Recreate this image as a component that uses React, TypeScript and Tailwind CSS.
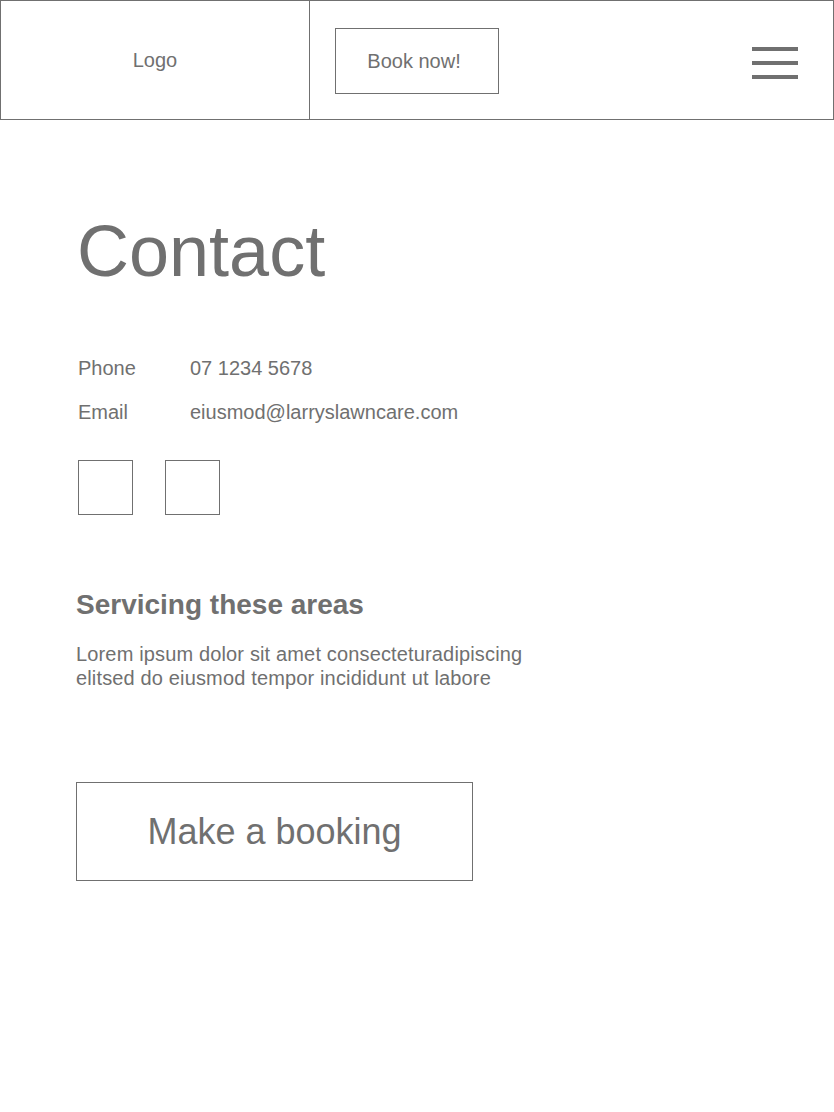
import React from 'react';

// wireframe grey used for every line and label
const ink = 'text-[#707070]';

const Header: React.FC = () => (
  <header className="flex h-[120px] border border-[#707070]">
    <div className="flex w-[309px] items-center justify-center border-r border-[#707070] text-[20px]">
      <span>Logo</span>
    </div>
    <div className="flex flex-1 items-start justify-between pl-[25px] pr-[35px] pt-[27px]">
      <button className="flex h-[66px] w-[164px] items-center justify-center border border-[#707070] text-[20px]">
        <span className="-ml-[6px]">Book now!</span>
      </button>
      <div className="mt-[19px] flex w-[46px] flex-col gap-[10px]">
        <span className="block h-[4px] bg-[#707070]" />
        <span className="block h-[4px] bg-[#707070]" />
        <span className="block h-[4px] bg-[#707070]" />
      </div>
    </div>
  </header>
);

const ContactRow: React.FC<{ label: string; value: string }> = ({ label, value }) => (
  <div className="flex text-[20px] leading-[24px]">
    <span className="w-[112px]">{label}</span>
    <span>{value}</span>
  </div>
);

export default function App() {
  return (
    <div
      className={`min-h-[1112px] bg-white ${ink}`}
      style={{ fontFamily: "'Liberation Sans', Arial, sans-serif" }}
    >
      <Header />

      <main className="px-[76px] pt-[95px]">
        <h1 className="ml-[1px] text-[72px] leading-[72px]">Contact</h1>

        <div className="mt-[69px] ml-[2px] flex flex-col gap-[20px]">
          <ContactRow label="Phone" value="07 1234 5678" />
          <ContactRow label="Email" value="eiusmod@larryslawncare.com" />
        </div>

        <div className="mt-[36px] ml-[2px] flex gap-[32px]">
          <div className="h-[55px] w-[55px] border border-[#707070]" />
          <div className="h-[55px] w-[55px] border border-[#707070]" />
        </div>

        <h2 className="mt-[74px] text-[28px] font-bold leading-[32px]">Servicing these areas</h2>
        <p className="mt-[21px] text-[20px] leading-[24px] tracking-[0.15px]">
          Lorem ipsum dolor sit amet consecteturadipiscing
          <br />
          elitsed do eiusmod tempor incididunt ut labore
        </p>

        <button className="mt-[92px] flex h-[99px] w-[397px] items-center justify-center border border-[#707070] text-[36px]">
          Make a booking
        </button>
      </main>
    </div>
  );
}
